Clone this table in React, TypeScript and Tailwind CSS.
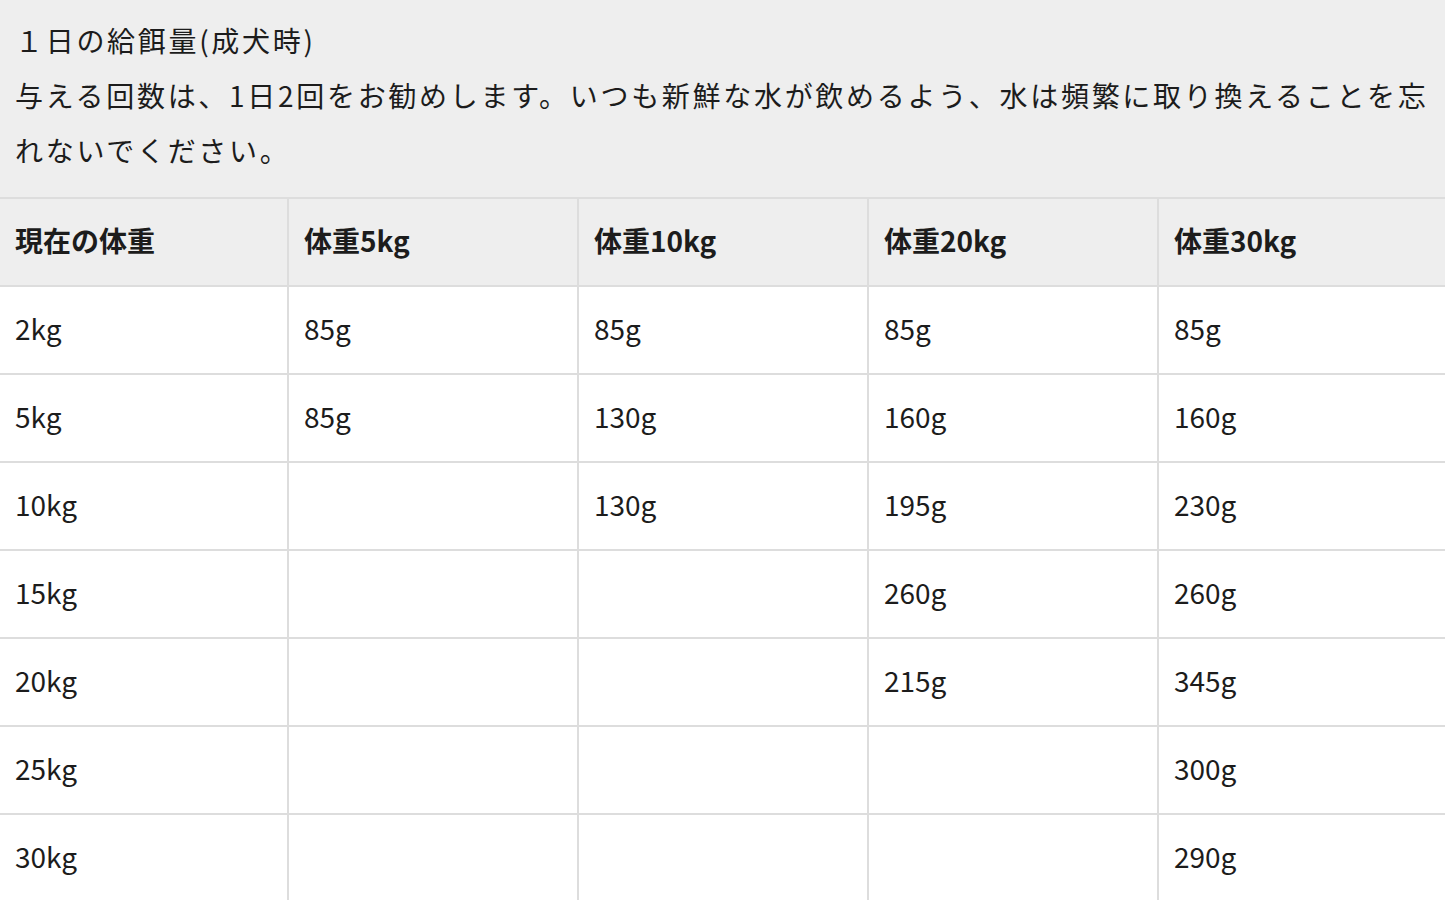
const HEADERS = ['現在の体重', '体重5kg', '体重10kg', '体重20kg', '体重30kg'];

const ROWS: string[][] = [
  ['2kg', '85g', '85g', '85g', '85g'],
  ['5kg', '85g', '130g', '160g', '160g'],
  ['10kg', '', '130g', '195g', '230g'],
  ['15kg', '', '', '260g', '260g'],
  ['20kg', '', '', '215g', '345g'],
  ['25kg', '', '', '', '300g'],
  ['30kg', '', '', '', '290g'],
];

export default function App() {
  return (
    <div
      className="w-[1445px] h-[900px] overflow-hidden bg-white text-[#1c1c1c]"
      style={{ fontFamily: '"Noto Sans CJK JP", "Noto Sans", sans-serif' }}
    >
      {/* caption */}
      <div className="bg-[#eeeeee] h-[197px] pl-[15px] pr-[8px] pt-[13px] text-[28px] leading-[55px] tracking-[2.7px]">
        <p>１日の給餌量(成犬時)</p>
        <p>
          与える回数は、1日2回をお勧めします。いつも新鮮な水が飲めるよう、水は頻繁に取り換えることを忘れないでください。
        </p>
      </div>

      {/* feeding table */}
      <table className="w-full table-fixed border-collapse text-[28px]">
        <colgroup>
          <col className="w-[288px]" />
          <col className="w-[290px]" />
          <col className="w-[290px]" />
          <col className="w-[290px]" />
          <col />
        </colgroup>
        <thead>
          <tr>
            {HEADERS.map((h, i) => (
              <th
                key={h}
                className={`h-[88px] bg-[#eeeeee] border-2 border-[#dddddd] px-[15px] pb-[4px] text-left font-bold ${
                  i === 0 ? 'border-l-0' : ''
                } ${i === HEADERS.length - 1 ? 'border-r-0' : ''}`}
              >
                {h}
              </th>
            ))}
          </tr>
        </thead>
        <tbody>
          {ROWS.map((row, r) => (
            <tr key={r}>
              {row.map((cell, i) => (
                <td
                  key={i}
                  className={`h-[88px] border-2 border-[#dddddd] px-[15px] pb-[5px] ${i === 0 ? 'border-l-0' : ''} ${
                    i === row.length - 1 ? 'border-r-0' : ''
                  }`}
                >
                  {cell}
                </td>
              ))}
            </tr>
          ))}
        </tbody>
      </table>
    </div>
  );
}
